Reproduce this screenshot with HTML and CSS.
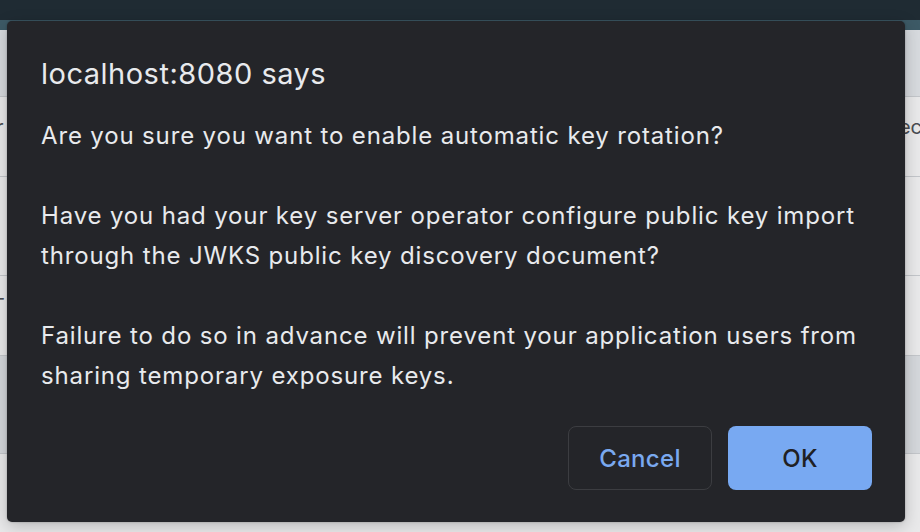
FILE: index.html
```html
<!DOCTYPE html>
<html>
<head>
<meta charset="utf-8">
<link rel="stylesheet" href="styles.css">
</head>
<body>
<div class="page">
  <div class="topbar"></div>
  <div class="band"></div>
  <div class="row row-head"></div>
  <div class="row row-a"><span class="cell-left">r</span><span class="cell-right">ec</span></div>
  <div class="row row-b"></div>
  <div class="row row-c"><span class="dash">-</span></div>
  <div class="row row-d"></div>
  <div class="row row-e"></div>
</div>
<div class="dialog" role="dialog">
  <div class="title">localhost:8080 says</div>
  <div class="message">
    <p>Are you sure you want to enable automatic key rotation?</p>
    <p>Have you had your key server operator configure public key import<br>through the JWKS public key discovery document?</p>
    <p>Failure to do so in advance will prevent your application users from<br>sharing temporary exposure keys.</p>
  </div>
  <div class="actions">
    <button class="btn btn-cancel">Cancel</button>
    <button class="btn btn-ok">OK</button>
  </div>
</div>
</body>
</html>
```

FILE: styles.css
```css
* { box-sizing: border-box; }
html, body { margin: 0; padding: 0; }
body {
  width: 920px;
  height: 532px;
  overflow: hidden;
  position: relative;
  background: #e8e8e9;
  font-family: Inter, "Liberation Sans", sans-serif;
}
.page { display: flex; flex-direction: column; }
.topbar { height: 20px; background: #1f2b33; }
.band { height: 10px; background: #3d5a66; }
.row {
  position: relative;
  border-bottom: 1px solid #c3c6ca;
  background: #e9e9ea;
  color: #4a4d52;
  font-size: 20px;
  line-height: 24px;
  display: flex;
  align-items: flex-start;
  justify-content: space-between;
}
.row-head { height: 67px; background: #d7dade; }
.row-a { height: 80px; padding-top: 18px; }
.row-b { height: 99px; }
.row-c { height: 80px; padding-top: 10px; }
.row-d { height: 98px; background: #d4d7db; }
.row-e { height: 80px; border-bottom: none; }
.cell-left { margin-left: -4px; }
.cell-right { margin-right: -2px; }
.dash { margin-left: -4px; }

.dialog {
  position: absolute;
  left: 7px;
  top: 21px;
  width: 898px;
  height: 501px;
  background: #242529;
  border-radius: 5px;
  box-shadow: 0 4px 16px rgba(0,0,0,0.22), 0 0 2px rgba(0,0,0,0.3);
  padding: 35px 33px 32px 34px;
  display: flex;
  flex-direction: column;
  color: #e8eaed;
}
.title {
  font-size: 29px;
  letter-spacing: 0.5px;
  line-height: 36px;
  height: 60px;
}
.message {
  font-size: 24px;
  letter-spacing: 0.85px;
  line-height: 40px;
  flex: 1;
}
.message p { margin: 0 0 40px 0; }
.message p:last-child { margin-bottom: 0; }
.actions {
  display: flex;
  justify-content: flex-end;
  gap: 16px;
}
.btn {
  width: 144px;
  height: 64px;
  border-radius: 8px;
  font-family: inherit;
  font-size: 24px;
  font-weight: 500;
  letter-spacing: 0.3px;
  cursor: pointer;
}
.btn-cancel {
  background: transparent;
  border: 1px solid #3c3d41;
  color: #7aa9f0;
}
.btn-ok {
  background: #78a9f2;
  border: none;
  color: #202124;
}
```
